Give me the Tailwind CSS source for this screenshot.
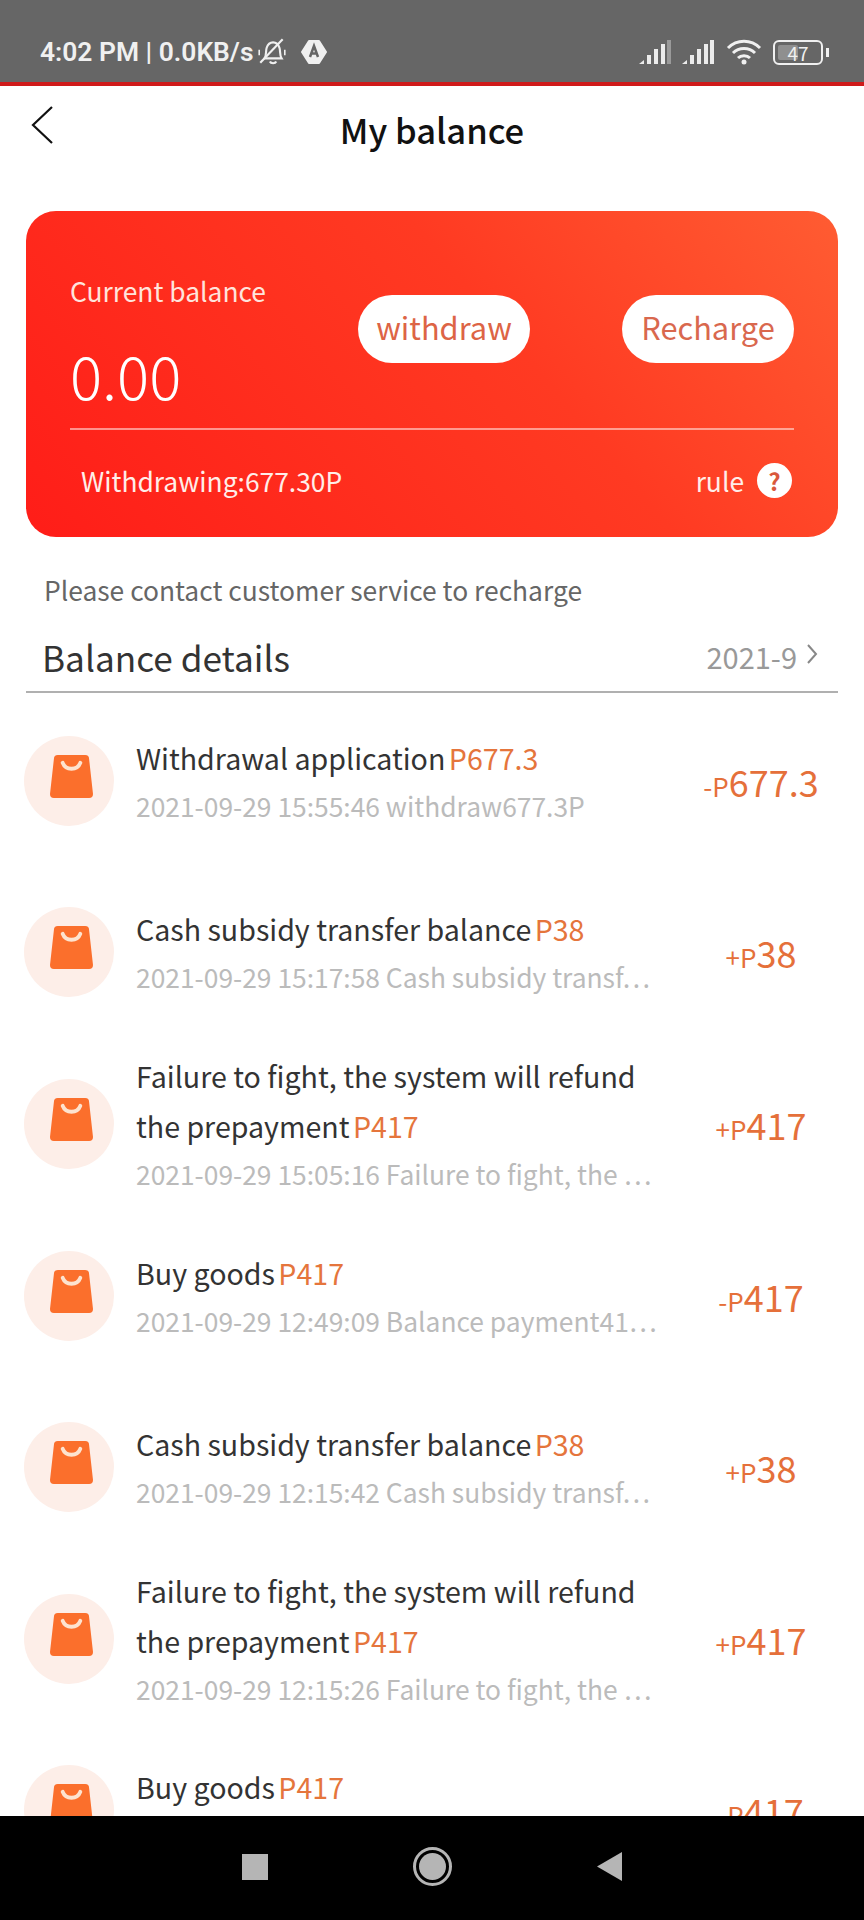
<!DOCTYPE html>
<html lang="en">
<head>
<meta charset="UTF-8">
<title>My balance</title>
<script src="https://cdn.jsdelivr.net/npm/@tailwindcss/browser@4"></script>
</head>
<body class="bg-white">
<div class="flex flex-col h-[1920px] w-[864px] overflow-hidden font-['Noto_Sans_CJK_SC','Noto_Sans',sans-serif]">

  <!-- status bar -->
  <div class="shrink-0 h-[86px] bg-[#666666] border-b-[4px] border-[#cf1a1a] flex items-center justify-between pt-[22px] pl-[40px] pr-[41px] text-[#f0f0f0]">
    <div class="flex items-center">
      <span class="font-['Roboto',sans-serif] font-semibold text-[26.400px] leading-none whitespace-nowrap">4:02 PM | 0.0KB/s</span>
      <svg class="ml-[3px] w-[32px] h-[32px]" viewBox="0 0 30 30" fill="none" stroke="#f0f0f0" stroke-width="2"><path d="M8 21c2-3 1-7 2-10s3-5 6-5 5 2 6 5 0 7 2 10z"/><path d="M13 24c1 2 5 2 6 0"/><path d="M4 25 25 3"/><path d="M3 13v5M27 13v5" stroke-width="1.500"/></svg>
      <svg class="ml-[12px] w-[28px] h-[28px]" viewBox="0 0 28 28"><path d="M9 3h10l7 11-7 11H9L2 14z" fill="#f0f0f0" stroke="#f0f0f0" stroke-linejoin="round" stroke-width="2"/><circle cx="14" cy="14" r="7" fill="#f0f0f0"/><path d="M10 19 14 8l4 11M11.500 15.500h5" fill="none" stroke="#666666" stroke-width="2.500"/></svg>
    </div>
    <div class="flex items-center">
      <svg class="w-[33px] h-[26px]" viewBox="0 0 33 26" fill="#ececec"><path d="M1 25l5-4v4z"/><rect x="9" y="16" width="4" height="9"/><rect x="16" y="10" width="4" height="15"/><rect x="23" y="5" width="4" height="20"/><rect x="29" y="1" width="4" height="24" fill="#9a9a9a"/></svg>
      <svg class="ml-[10px] w-[33px] h-[26px]" viewBox="0 0 33 26" fill="#ececec"><path d="M1 25l5-4v4z"/><rect x="9" y="16" width="4" height="9"/><rect x="16" y="10" width="4" height="15"/><rect x="23" y="5" width="4" height="20"/><rect x="29" y="1" width="4" height="24"/></svg>
      <svg class="ml-[12px] w-[36px] h-[26px]" viewBox="0 0 36 26" fill="none" stroke="#f0f0f0" stroke-width="3"><path d="M2 9c9-9 23-9 32 0"/><path d="M7 14c6-6 16-6 22 0"/><path d="M12 19c3-3 9-3 12 0"/><circle cx="18" cy="23" r="2.500" fill="#f0f0f0" stroke="none"/></svg>
      <div class="ml-[11px] relative w-[50px] h-[25px] rounded-[6px] border-[2px] border-[#f0f0f0] flex items-center justify-center">
        <div class="absolute left-[3px] top-[3px] bottom-[3px] w-[20px] bg-[#8f8f8f] rounded-[2px]"></div>
        <span class="relative text-[19px] leading-none">47</span>
        <div class="absolute right-[-8px] top-[6px] w-[3px] h-[9px] bg-[#f0f0f0]"></div>
      </div>
    </div>
  </div>

  <main class="flex-1 min-h-0 overflow-hidden">
    <!-- title -->
    <div class="relative h-[125px]">
      <svg class="absolute left-[29px] top-[19px] w-[26px] h-[40px]" viewBox="0 0 26 40" fill="none" stroke="#111111" stroke-width="2.200"><path d="M23 2 4 20l19 18"/></svg>
      <h1 class="pt-[16px] text-center text-[34.500px] leading-[54px] font-medium text-[#111111]">My balance</h1>
    </div>

    <!-- balance card -->
    <section class="mx-[26px] h-[326px] rounded-[30px] bg-[linear-gradient(50deg,#ff1d18_0%,#ff3a22_60%,#ff5c32_100%)] px-[44px] text-white">
      <div class="flex justify-between h-[219px] border-b-[2px] border-white/50">
        <div class="pt-[58px]">
          <p class="text-[26.400px] leading-[44px] text-[#ffe4dc]">Current balance</p>
          <p class="mt-[21px] text-[60px] leading-[80px] font-light">0.00</p>
        </div>
        <div class="flex gap-[92px] pt-[84px] items-start">
          <button class="w-[172px] h-[68px] pb-[3px] rounded-full bg-white text-[30.800px] text-[#dd6445]">withdraw</button>
          <button class="w-[172px] h-[68px] pb-[3px] rounded-full bg-white text-[30.800px] text-[#d9684e]">Recharge</button>
        </div>
      </div>
      <div class="flex items-center justify-between h-[102px] pl-[11px] pr-[2px] text-[26.400px] text-[#ffeee9]">
        <span>Withdrawing:677.30P</span>
        <span class="flex items-center gap-[13px]">rule<span class="w-[35px] h-[35px] rounded-full bg-white flex items-center justify-center text-[24px] font-bold leading-none text-[#d9583c]">?</span></span>
      </div>
    </section>

    <p class="pl-[44px] mt-[33px] text-[26.400px] leading-[40px] text-[#666666]">Please contact customer service to recharge</p>

    <!-- details header -->
    <div class="mx-[26px] mt-[13px] h-[70px] flex items-center justify-between border-b-[2px] border-[#b0b0b0] pl-[16px] pr-[20px]">
      <span class="text-[35.200px] text-[#333333]">Balance details</span>
      <span class="flex items-center text-[29px] text-[#999999]">2021-9
        <svg class="ml-[10px] mb-[6px] w-[11px] h-[20px]" viewBox="0 0 11 20" fill="none" stroke="#888888" stroke-width="2"><path d="m1 1 8 9-8 9"/></svg>
      </span>
    </div>

    <!-- list -->
    <ul class="mt-[2px]">
      <li class="flex items-center h-[171.6px] pl-[24px]">
        <span class="shrink-0 w-[90px] h-[90px] rounded-full bg-[#fdeee8] flex items-center justify-center"><svg class="ml-[5px] mb-[9px] w-[43px] h-[45px]" viewBox="0 0 44 46"><path d="M8 1h28q4 0 4 4l4 36q0 4-4 4H4q-4 0-4-4L4 5q0-4 4-4z" fill="#fb6f2c"/><path d="M13 9c3 8 15 8 18 0" fill="none" stroke="#fde3cf" stroke-width="4" stroke-linecap="round"/></svg></span>
        <div class="w-[560px] ml-[22px] shrink-0">
          <p class="text-[28.600px] leading-[50px] text-[#333333]">Withdrawal application <span class="ml-[-3px] text-[#e5753c]">P677.3</span></p>
          <p class="text-[26.400px] leading-[46px] text-[#bbbbbb] whitespace-nowrap">2021-09-29 15:55:46 withdraw677.3P</p>
        </div>
        <div class="w-[130px] text-center whitespace-nowrap text-[#e5703a] text-[36px]"><span class="text-[26px]">-P</span>677.3</div>
      </li>
      <li class="flex items-center h-[171.6px] pl-[24px]">
        <span class="shrink-0 w-[90px] h-[90px] rounded-full bg-[#fdeee8] flex items-center justify-center"><svg class="ml-[5px] mb-[9px] w-[43px] h-[45px]" viewBox="0 0 44 46"><path d="M8 1h28q4 0 4 4l4 36q0 4-4 4H4q-4 0-4-4L4 5q0-4 4-4z" fill="#fb6f2c"/><path d="M13 9c3 8 15 8 18 0" fill="none" stroke="#fde3cf" stroke-width="4" stroke-linecap="round"/></svg></span>
        <div class="w-[560px] ml-[22px] shrink-0">
          <p class="text-[28.600px] leading-[50px] text-[#333333]">Cash subsidy transfer balance <span class="ml-[-3px] text-[#e5753c]">P38</span></p>
          <p class="text-[26.400px] leading-[46px] text-[#bbbbbb] whitespace-nowrap">2021-09-29 15:17:58 Cash subsidy transf⋯</p>
        </div>
        <div class="w-[130px] text-center whitespace-nowrap text-[#e5703a] text-[36px]"><span class="text-[26px]">+P</span>38</div>
      </li>
      <li class="flex items-center h-[171.6px] pl-[24px]">
        <span class="shrink-0 w-[90px] h-[90px] rounded-full bg-[#fdeee8] flex items-center justify-center"><svg class="ml-[5px] mb-[9px] w-[43px] h-[45px]" viewBox="0 0 44 46"><path d="M8 1h28q4 0 4 4l4 36q0 4-4 4H4q-4 0-4-4L4 5q0-4 4-4z" fill="#fb6f2c"/><path d="M13 9c3 8 15 8 18 0" fill="none" stroke="#fde3cf" stroke-width="4" stroke-linecap="round"/></svg></span>
        <div class="w-[560px] ml-[22px] shrink-0">
          <p class="text-[28.600px] leading-[50px] text-[#333333]">Failure to fight, the system will refund<br>the prepayment <span class="ml-[-3px] text-[#e5753c]">P417</span></p>
          <p class="text-[26.400px] leading-[46px] text-[#bbbbbb] whitespace-nowrap">2021-09-29 15:05:16 Failure to fight, the ⋯</p>
        </div>
        <div class="w-[130px] text-center whitespace-nowrap text-[#e5703a] text-[36px]"><span class="text-[26px]">+P</span>417</div>
      </li>
      <li class="flex items-center h-[171.6px] pl-[24px]">
        <span class="shrink-0 w-[90px] h-[90px] rounded-full bg-[#fdeee8] flex items-center justify-center"><svg class="ml-[5px] mb-[9px] w-[43px] h-[45px]" viewBox="0 0 44 46"><path d="M8 1h28q4 0 4 4l4 36q0 4-4 4H4q-4 0-4-4L4 5q0-4 4-4z" fill="#fb6f2c"/><path d="M13 9c3 8 15 8 18 0" fill="none" stroke="#fde3cf" stroke-width="4" stroke-linecap="round"/></svg></span>
        <div class="w-[560px] ml-[22px] shrink-0">
          <p class="text-[28.600px] leading-[50px] text-[#333333]">Buy goods <span class="ml-[-3px] text-[#e5753c]">P417</span></p>
          <p class="text-[26.400px] leading-[46px] text-[#bbbbbb] whitespace-nowrap">2021-09-29 12:49:09 Balance payment41⋯</p>
        </div>
        <div class="w-[130px] text-center whitespace-nowrap text-[#e5703a] text-[36px]"><span class="text-[26px]">-P</span>417</div>
      </li>
      <li class="flex items-center h-[171.6px] pl-[24px]">
        <span class="shrink-0 w-[90px] h-[90px] rounded-full bg-[#fdeee8] flex items-center justify-center"><svg class="ml-[5px] mb-[9px] w-[43px] h-[45px]" viewBox="0 0 44 46"><path d="M8 1h28q4 0 4 4l4 36q0 4-4 4H4q-4 0-4-4L4 5q0-4 4-4z" fill="#fb6f2c"/><path d="M13 9c3 8 15 8 18 0" fill="none" stroke="#fde3cf" stroke-width="4" stroke-linecap="round"/></svg></span>
        <div class="w-[560px] ml-[22px] shrink-0">
          <p class="text-[28.600px] leading-[50px] text-[#333333]">Cash subsidy transfer balance <span class="ml-[-3px] text-[#e5753c]">P38</span></p>
          <p class="text-[26.400px] leading-[46px] text-[#bbbbbb] whitespace-nowrap">2021-09-29 12:15:42 Cash subsidy transf⋯</p>
        </div>
        <div class="w-[130px] text-center whitespace-nowrap text-[#e5703a] text-[36px]"><span class="text-[26px]">+P</span>38</div>
      </li>
      <li class="flex items-center h-[171.6px] pl-[24px]">
        <span class="shrink-0 w-[90px] h-[90px] rounded-full bg-[#fdeee8] flex items-center justify-center"><svg class="ml-[5px] mb-[9px] w-[43px] h-[45px]" viewBox="0 0 44 46"><path d="M8 1h28q4 0 4 4l4 36q0 4-4 4H4q-4 0-4-4L4 5q0-4 4-4z" fill="#fb6f2c"/><path d="M13 9c3 8 15 8 18 0" fill="none" stroke="#fde3cf" stroke-width="4" stroke-linecap="round"/></svg></span>
        <div class="w-[560px] ml-[22px] shrink-0">
          <p class="text-[28.600px] leading-[50px] text-[#333333]">Failure to fight, the system will refund<br>the prepayment <span class="ml-[-3px] text-[#e5753c]">P417</span></p>
          <p class="text-[26.400px] leading-[46px] text-[#bbbbbb] whitespace-nowrap">2021-09-29 12:15:26 Failure to fight, the ⋯</p>
        </div>
        <div class="w-[130px] text-center whitespace-nowrap text-[#e5703a] text-[36px]"><span class="text-[26px]">+P</span>417</div>
      </li>
      <li class="flex items-center h-[171.6px] pl-[24px]">
        <span class="shrink-0 w-[90px] h-[90px] rounded-full bg-[#fdeee8] flex items-center justify-center"><svg class="ml-[5px] mb-[9px] w-[43px] h-[45px]" viewBox="0 0 44 46"><path d="M8 1h28q4 0 4 4l4 36q0 4-4 4H4q-4 0-4-4L4 5q0-4 4-4z" fill="#fb6f2c"/><path d="M13 9c3 8 15 8 18 0" fill="none" stroke="#fde3cf" stroke-width="4" stroke-linecap="round"/></svg></span>
        <div class="w-[560px] ml-[22px] shrink-0">
          <p class="text-[28.600px] leading-[50px] text-[#333333]">Buy goods <span class="ml-[-3px] text-[#e5753c]">P417</span></p>
          <p class="h-[46px]"></p>
        </div>
        <div class="w-[130px] text-center whitespace-nowrap text-[#e5703a] text-[36px]"><span class="text-[26px]">-P</span>417</div>
      </li>
    </ul>
  </main>

  <!-- android nav -->
  <nav class="shrink-0 h-[104px] bg-black flex items-center justify-center gap-[145px] pb-[3px]">
    <div class="w-[26px] h-[26px] bg-[#b5b5b5]"></div>
    <div class="w-[39px] h-[39px] rounded-full border-[3px] border-[#b5b5b5] p-[3px]"><div class="w-full h-full rounded-full bg-[#b5b5b5]"></div></div>
    <svg class="w-[25px] h-[29px]" viewBox="0 0 26 30"><path d="M26 0v30L0 15z" fill="#b5b5b5"/></svg>
  </nav>
</div>
</body>
</html>
